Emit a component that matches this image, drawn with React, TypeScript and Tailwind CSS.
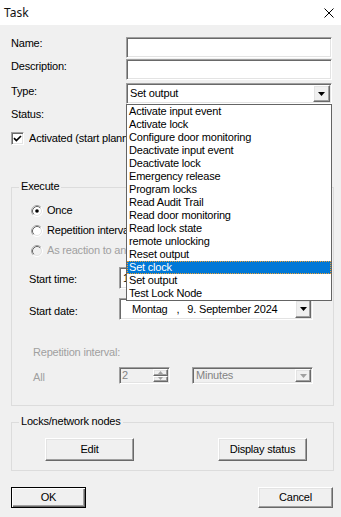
import React from "react";

const sunken =
  "border border-t-[#a0a0a0] border-l-[#a0a0a0] border-b-white border-r-white shadow-[inset_1px_1px_0_#696969,inset_-1px_-1px_0_#e3e3e3]";
const raised =
  "border border-t-white border-l-white border-b-[#696969] border-r-[#696969] shadow-[inset_-1px_-1px_0_#a0a0a0,inset_1px_1px_0_#e3e3e3] bg-[#f0f0f0]";

function Arrow({ color = "#000" }: { color?: string }) {
  return (
    <svg width="7" height="4" viewBox="0 0 7 4">
      <path d="M0 0H7L3.5 4Z" fill={color} />
    </svg>
  );
}

function SmallArrow({ up, color }: { up?: boolean; color: string }) {
  return (
    <svg width="5" height="3" viewBox="0 0 5 3">
      <path d={up ? "M0 3H5L2.5 0Z" : "M0 0H5L2.5 3Z"} fill={color} />
    </svg>
  );
}

function Radio({ checked, disabled }: { checked?: boolean; disabled?: boolean }) {
  return (
    <svg width="12" height="12" viewBox="0 0 12 12" className="shrink-0">
      <circle cx="6" cy="6" r="5.5" fill={disabled ? "#f0f0f0" : "#fff"} stroke="#fff" />
      <path d="M2.11 9.89A5.5 5.5 0 0 1 9.89 2.11" stroke="#a0a0a0" fill="none" />
      <circle cx="6" cy="6" r="4.5" fill="none" stroke="#e3e3e3" />
      <path d="M2.82 9.18A4.5 4.5 0 0 1 9.18 2.82" stroke="#696969" fill="none" />
      {checked && <circle cx="6" cy="6" r="1.8" fill="#000" />}
    </svg>
  );
}

const items = [
  "Activate input event",
  "Activate lock",
  "Configure door monitoring",
  "Deactivate input event",
  "Deactivate lock",
  "Emergency release",
  "Program locks",
  "Read Audit Trail",
  "Read door monitoring",
  "Read lock state",
  "remote unlocking",
  "Reset output",
  "Set clock",
  "Set output",
  "Test Lock Node",
];

export default function App() {
  return (
    <div className="w-[341px] h-[517px] bg-[#f0f0f0] overflow-hidden text-black text-[11px] leading-[13px] tracking-[-0.2px] font-['Liberation_Sans',Arial,sans-serif]">
      {/* Title bar */}
      <div className="h-[25px] bg-white flex items-center justify-between">
        <span className="pl-[4px] text-[12px] leading-[16px] tracking-normal font-['Noto_Sans',sans-serif] text-[#111]">
          Task
        </span>
        <svg className="mr-[7px]" width="10" height="10" viewBox="0 0 10 10">
          <path d="M0.5 0.5L9.5 9.5M9.5 0.5L0.5 9.5" stroke="#000" strokeWidth="1" />
        </svg>
      </div>

      <div className="pl-[11px] pt-[12px]">
        {/* Name */}
        <div className="flex">
          <div className="w-[115px]">Name:</div>
          <div className={`w-[206px] h-[21px] bg-white ${sunken}`} />
        </div>
        {/* Description */}
        <div className="flex mt-[1px]">
          <div className="w-[115px] pt-[1px]">Description:</div>
          <div className={`w-[206px] h-[21px] bg-white ${sunken}`} />
        </div>
        {/* Type */}
        <div className="flex mt-[3px]">
          <div className="w-[115px] pt-[2px]">Type:</div>
          <div className="relative">
            <div className={`w-[206px] h-[21px] bg-white ${sunken} p-[1px] flex`}>
              <div className="flex-1 pl-[2px] flex items-center">Set output</div>
              <div className={`w-[17px] h-[17px] ${raised} flex items-center justify-center`}>
                <Arrow />
              </div>
            </div>
            <div className="absolute left-0 top-[21px] z-10 w-[206px] bg-white border border-[#646464]">
              {items.map((it) =>
                it === "Set clock" ? (
                  <div
                    key={it}
                    className="h-[13px] pl-[2px] bg-[#0078d7] text-white outline outline-1 outline-dotted outline-[#f0a030] -outline-offset-1 whitespace-nowrap"
                  >
                    {it}
                  </div>
                ) : (
                  <div key={it} className="h-[13px] pl-[2px] whitespace-nowrap">
                    {it}
                  </div>
                )
              )}
            </div>
          </div>
        </div>
        {/* Status */}
        <div className="mt-[4px] h-[13px]">Status:</div>
        {/* Activated */}
        <div className="mt-[11px] flex items-center gap-[5px] h-[13px]">
          <div className={`w-[13px] h-[13px] bg-white ${sunken} flex items-center justify-center shrink-0`}>
            <svg width="9" height="9" viewBox="0 0 9 9">
              <path d="M1 4.2L3.4 6.6L8 2" stroke="#000" strokeWidth="1.7" fill="none" />
            </svg>
          </div>
          <span className="w-[97px] overflow-hidden whitespace-nowrap">Activated (start planned task)</span>
        </div>

        {/* Execute group */}
        <div className="relative mt-[42px] w-[323px] h-[219px] border border-[#dcdcdc]">
          <span className="absolute -top-[8px] left-[7px] px-[2px] bg-[#f0f0f0]">Execute</span>
          <div className="mt-[16px] ml-[19px] flex items-center gap-[4px] h-[13px]">
            <Radio checked />
            <span>Once</span>
          </div>
          <div className="mt-[7px] ml-[19px] flex items-center gap-[4px] h-[13px]">
            <Radio />
            <span className="w-[80px] overflow-hidden whitespace-nowrap">Repetition interval</span>
          </div>
          <div className="mt-[7px] ml-[19px] flex items-center gap-[4px] h-[13px] text-[#a0a0a0]">
            <Radio disabled />
            <span className="w-[80px] overflow-hidden whitespace-nowrap">As reaction to an event</span>
          </div>
          {/* Start time */}
          <div className="mt-[10px] flex items-center">
            <div className="ml-[17px] w-[90px] pt-[3px]">Start time:</div>
            <div className={`w-[110px] h-[22px] bg-white ${sunken} flex items-center pl-[3px]`}>
              <span className="w-[4px] overflow-hidden whitespace-nowrap">11:00:00</span>
            </div>
          </div>
          {/* Start date */}
          <div className="mt-[9px] flex items-center">
            <div className="ml-[17px] w-[90px] pt-[4px]">Start date:</div>
            <div className={`w-[194px] h-[22px] bg-white ${sunken} p-[1px] flex`}>
              <div className="flex-1 flex items-center pl-[11px] whitespace-nowrap">
                <span>Montag</span>
                <span className="ml-[9px]">,</span>
                <span className="ml-[8px]">9. September 2024</span>
              </div>
              <div className={`w-[16px] h-[18px] ${raised} flex items-center justify-center`}>
                <Arrow />
              </div>
            </div>
          </div>
          {/* Repetition interval */}
          <div className="mt-[26px] ml-[21px] h-[13px] text-[#a0a0a0]">Repetition interval:</div>
          <div className="mt-[8px] flex items-center">
            <div className="ml-[21px] w-[86px] pt-[3px] text-[#a0a0a0]">All</div>
            <div className={`w-[51px] h-[17px] bg-[#f0f0f0] ${sunken} p-[1px] flex`}>
              <div className="flex-1 pl-[1px] flex items-center text-[#838383]">2</div>
              <div className="w-[15px] flex flex-col">
                <div className={`flex-1 ${raised} flex items-center justify-center`}>
                  <SmallArrow up color="#a0a0a0" />
                </div>
                <div className={`flex-1 ${raised} flex items-center justify-center`}>
                  <SmallArrow color="#a0a0a0" />
                </div>
              </div>
            </div>
            <div className={`ml-[22px] w-[121px] h-[17px] bg-[#f0f0f0] ${sunken} p-[1px] flex`}>
              <div className="flex-1 pl-[2px] flex items-center text-[#838383]">Minutes</div>
              <div className={`w-[16px] ${raised} flex items-center justify-center`}>
                <Arrow color="#a0a0a0" />
              </div>
            </div>
          </div>
        </div>

        {/* Locks group */}
        <div className="relative mt-[16px] w-[323px] h-[49px] border border-[#dcdcdc]">
          <span className="absolute -top-[8px] left-[7px] px-[2px] bg-[#f0f0f0] whitespace-nowrap">
            Locks/network nodes
          </span>
          <div className="mt-[15px] flex">
            <div className={`ml-[33px] w-[89px] h-[23px] ${raised} flex items-center justify-center`}>Edit</div>
            <div className={`ml-[84px] w-[89px] h-[23px] ${raised} flex items-center justify-center`}>
              Display status
            </div>
          </div>
        </div>

        {/* OK / Cancel */}
        <div className="mt-[16px] w-[322px] flex justify-between">
          <div className="w-[75px] h-[21px] bg-[#f0f0f0] border border-black shadow-[inset_1px_1px_0_#fff,inset_-1px_-1px_0_#696969,inset_-2px_-2px_0_#a0a0a0] flex items-center justify-center">
            OK
          </div>
          <div className={`w-[75px] h-[21px] ${raised} flex items-center justify-center`}>Cancel</div>
        </div>
      </div>
    </div>
  );
}
